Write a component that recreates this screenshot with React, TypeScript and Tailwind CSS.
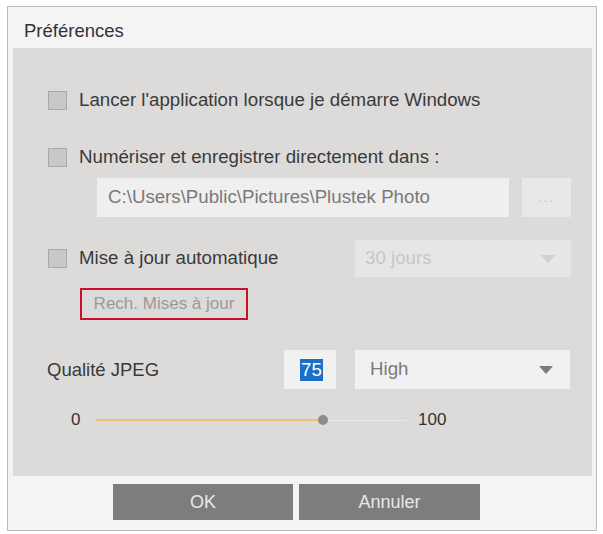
export default function App() {
  return (
    <div className="w-[603px] h-[534px] bg-white pl-[7px] pt-[6px] font-['Liberation_Sans',Arial,sans-serif] text-[#3a3a3a]">
      <div className="w-[590px] h-[525px] border border-[#bcbcbc] bg-[#f4f4f4] flex flex-col">
        <div className="h-[41px] pl-[16px] pt-[6px] flex items-center text-[18.5px] text-[#333]">Préférences</div>

        <div className="ml-[5px] mr-[4px] h-[428px] bg-[#dcdbd9] flex flex-col pl-[35px] text-[18.7px]">
          <Check className="mt-[43px]" label="Lancer l'application lorsque je démarre Windows" />
          <Check className="mt-[38px]" label="Numériser et enregistrer directement dans :" />

          <div className="mt-[11px] ml-[49px] flex gap-[13px]">
            <div className="w-[412px] h-[39px] bg-[#efefef] flex items-center pl-[11px] text-[#7a7a7a]">
              C:\Users\Public\Pictures\Plustek Photo
            </div>
            <div className="w-[49px] h-[39px] bg-[#e8e8e8] flex items-center justify-center text-[#c4c4c4] text-[13px] tracking-[2px]">
              ...
            </div>
          </div>

          <div className="mt-[23px] flex items-center">
            <Check label="Mise à jour automatique" />
            <div className="ml-auto mr-[21px] w-[216px] h-[37px] bg-[#e6e6e6] flex items-center pl-[10px] pr-[16px] text-[#c6c6c6]">
              <span>30 jours</span>
              <Arrow className="ml-auto fill-[#cfcfcf]" />
            </div>
          </div>

          <div className="mt-[11px] ml-[32px] w-[168px] h-[32px] border-2 border-[#c8102e] flex items-center justify-center text-[17px] text-[#9a9a9a]">
            Rech. Mises à jour
          </div>

          <div className="mt-[30px] flex items-center h-[39px]">
            <span className="-ml-[1px] text-[18.5px] text-[#3a3a3a] w-[237px]">Qualité JPEG</span>
            <div className="w-[52px] h-[39px] bg-[#f1f1f1] flex items-center pl-[16px]">
              <span className="bg-[#1b6fc4] text-white leading-[22px] px-[1px]">75</span>
            </div>
            <div className="ml-[19px] w-[215px] h-[39px] bg-[#f1f1f1] flex items-center pl-[15px] pr-[17px] text-[#7a7a7a]">
              <span>High</span>
              <Arrow className="ml-auto fill-[#7c7c7c]" />
            </div>
          </div>

          <div className="mt-[21px] h-[20px] flex items-center text-[17px] text-[#333]">
            <span className="ml-[23px] w-[25px]">0</span>
            <div className="w-[310px] h-[10px] flex items-center">
              <div className="w-[222px] h-[2px] bg-[#e8c56b]" />
              <div className="w-[10px] h-[10px] rounded-full bg-[#8c8c8c]" />
              <div className="flex-1 h-[1px] bg-[#e9e9e9]" />
            </div>
            <span className="ml-[12px]">100</span>
          </div>
        </div>

        <div className="flex pl-[105px] gap-[6px] pt-[8px]">
          <div className="w-[180px] h-[36px] bg-[#7d7d7d] text-[#e8e8e8] text-[18px] flex items-center justify-center">OK</div>
          <div className="w-[181px] h-[36px] bg-[#7d7d7d] text-[#e8e8e8] text-[18px] flex items-center justify-center">Annuler</div>
        </div>
      </div>
    </div>
  );
}

function Check({ label, className = "" }: { label: string; className?: string }) {
  return (
    <div className={`flex items-center h-[19px] ${className}`}>
      <div className="w-[19px] h-[19px] bg-[#c8c8c8] border border-[#a8a8a8]" />
      <span className="ml-[12px] text-[#3a3a3a] whitespace-nowrap">{label}</span>
    </div>
  );
}

function Arrow({ className = "" }: { className?: string }) {
  return (
    <svg width="14" height="8" viewBox="0 0 14 8" className={className}>
      <path d="M0 0 L14 0 L7 8 Z" />
    </svg>
  );
}
